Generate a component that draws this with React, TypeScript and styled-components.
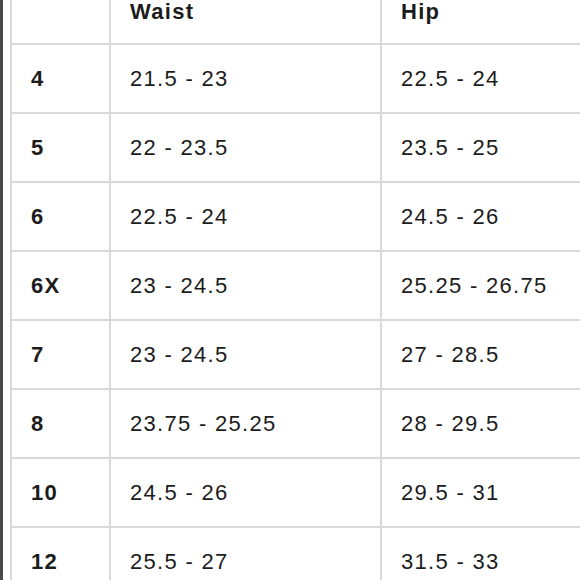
import React from 'react'
import styled, { createGlobalStyle } from 'styled-components'

const GlobalStyle = createGlobalStyle`
html, body {
    margin: 0;
    padding: 0;
    background: #ffffff;
    overflow: hidden;
}
`

const Frame = styled.div`
width: 580px;
height: 580px;
box-sizing: border-box;
border-left: 3px solid #4a4a4a;
padding-left: 7px;
overflow: hidden;
background: #fff;
`

const Table = styled.table`
margin-top: -26px;
width: 645px;
table-layout: fixed;
border-collapse: collapse;
font-family: "Liberation Sans", Arial, sans-serif;
font-size: 22px;
letter-spacing: 1.3px;
color: #1c1c1c;
`

const Cell = styled.td<{ $bold?: boolean }>`
height: 67px;
padding: 0 19px;
border: 2px solid #d9d9d9;
vertical-align: middle;
text-align: left;
font-weight: ${p => (p.$bold ? 700 : 400)};
white-space: nowrap;
`

const HeadCell = styled(Cell).attrs({ as: 'th' })`
height: 62px;
padding-top: 5px;
font-weight: 700;
`

type SizeRow = { size: string; waist: string; hip: string }

const rows: SizeRow[] = [
    { size: '4', waist: '21.5 - 23', hip: '22.5 - 24' },
    { size: '5', waist: '22 - 23.5', hip: '23.5 - 25' },
    { size: '6', waist: '22.5 - 24', hip: '24.5 - 26' },
    { size: '6X', waist: '23 - 24.5', hip: '25.25 - 26.75' },
    { size: '7', waist: '23 - 24.5', hip: '27 - 28.5' },
    { size: '8', waist: '23.75 - 25.25', hip: '28 - 29.5' },
    { size: '10', waist: '24.5 - 26', hip: '29.5 - 31' },
    { size: '12', waist: '25.5 - 27', hip: '31.5 - 33' },
    { size: '14', waist: '26.5 - 28', hip: '33 - 35' },
]

export default function App() {
    return (
        <>
            <GlobalStyle />
            <Frame>
                <Table>
                    <colgroup>
                        <col style={{ width: 99 }} />
                        <col style={{ width: 271 }} />
                        <col style={{ width: 275 }} />
                    </colgroup>
                    <thead>
                        <tr>
                            <HeadCell></HeadCell>
                            <HeadCell>Waist</HeadCell>
                            <HeadCell>Hip</HeadCell>
                        </tr>
                    </thead>
                    <tbody>
                        {rows.map(row => (
                            <tr key={row.size}>
                                <Cell $bold>{row.size}</Cell>
                                <Cell>{row.waist}</Cell>
                                <Cell>{row.hip}</Cell>
                            </tr>
                        ))}
                    </tbody>
                </Table>
            </Frame>
        </>
    )
}
